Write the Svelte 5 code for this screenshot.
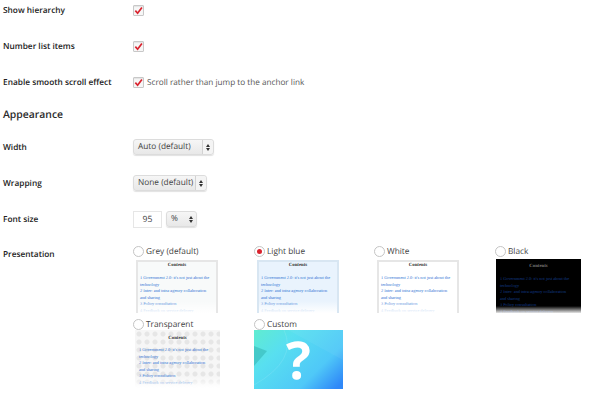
<script>
  const rows = [
    { label: 'Show hierarchy' },
    { label: 'Number list items' },
    { label: 'Enable smooth scroll effect', note: 'Scroll rather than jump to the anchor link' }
  ];
  const themes = [
    { name: 'Grey (default)', cls: 'grey' },
    { name: 'Light blue', cls: 'blue', on: true },
    { name: 'White', cls: 'white' },
    { name: 'Black', cls: 'black' },
    { name: 'Transparent', cls: 'clear' },
    { name: 'Custom', cls: 'custom' }
  ];
  const links = [
    '1 Government 2.0: it\'s not just about the\ntechnology',
    '2 Inter- and intra-agency collaboration\nand sharing',
    '3 Policy consultation',
    '4 Feedback on service delivery'
  ];
</script>

<div class="page">
  {#each rows as row}
    <div class="row check-row">
      <div class="label">{row.label}</div>
      <div class="field">
        <span class="check">
          <svg viewBox="0 0 10 10" width="9" height="9"><path d="M1.5 5.2 L4 8 L8.8 1.6" fill="none" stroke="#d9232e" stroke-width="1.9"/></svg>
        </span>
        {#if row.note}<span class="note">{row.note}</span>{/if}
      </div>
    </div>
  {/each}

  <h2>Appearance</h2>

  <div class="row select-row">
    <div class="label">Width</div>
    <div class="field"><span class="select wide">Auto (default)<span class="arrows"><i class="up"></i><i class="down"></i></span></span></div>
  </div>
  <div class="row select-row">
    <div class="label">Wrapping</div>
    <div class="field"><span class="select mid">None (default)<span class="arrows"><i class="up"></i><i class="down"></i></span></span></div>
  </div>
  <div class="row select-row">
    <div class="label">Font size</div>
    <div class="field">
      <span class="number">95</span>
      <span class="select unit">%<span class="arrows plain"><i class="up"></i><i class="down"></i></span></span>
    </div>
  </div>

  <div class="row present">
    <div class="label">Presentation</div>
    <div class="themes">
      {#each themes as theme}
        <div class="theme {theme.cls}">
          <div class="theme-name">
            <span class="radio" class:on={theme.on}></span>
            {theme.name}
          </div>
          {#if theme.cls === 'custom'}
            <div class="custom-box">
              <svg class="facet" viewBox="0 0 89 59" width="89" height="59">
                <path d="M0 16 L13 21 L0 36 Z" fill="#2aa8a8" opacity="0.45"/>
                <path d="M30 0 Q44 30 0 55" fill="none" stroke="#fff" stroke-width="0.6" opacity="0.18"/>
                <path d="M34 0 L89 30 L89 0 Z" fill="#fff" opacity="0.05"/>
              </svg>
              <span class="mark">?</span>
            </div>
          {:else}
            <div class="preview">
              <div class="toc-title">Contents</div>
              {#each links as link}
                <div class="toc-link">{link}</div>
              {/each}
              <div class="fade"></div>
            </div>
          {/if}
        </div>
      {/each}
    </div>
  </div>
</div>

<style>
  :global(body) {
    margin: 0;
    background: #fff;
  }

  .page {
    width: 600px;
    height: 400px;
    overflow: hidden;
    padding: 1px 0 0 3px;
    box-sizing: border-box;
    font-family: "Open Sans", "Liberation Sans", sans-serif;
    text-rendering: geometricPrecision;
    color: #333;
  }

  .row {
    display: grid;
    grid-template-columns: 130px 1fr;
    align-items: center;
  }

  .check-row {
    height: 18px;
    margin-bottom: 18px;
  }

  .label {
    font-size: 8.3px;
    font-weight: 600;
    color: #222;
  }

  .field {
    display: flex;
    align-items: center;
  }

  .check {
    width: 9px;
    height: 9px;
    border: 1px solid #c8c8c8;
    border-radius: 1px;
    background: #f7f7f7;
    display: flex;
    align-items: center;
    justify-content: center;
    box-shadow: inset 0 1px 1px rgba(0, 0, 0, 0.08);
  }

  .note {
    margin-left: 3px;
    font-size: 8.2px;
    color: #555;
  }

  h2 {
    margin: -6px 0 11px;
    height: 24px;
    line-height: 24px;
    font-size: 10.4px;
    font-weight: 600;
    color: #2a2a2a;
  }

  .select-row {
    height: 18px;
    margin-bottom: 18px;
  }

  .select {
    position: relative;
    display: inline-block;
    height: 16px;
    line-height: 14px;
    box-sizing: border-box;
    padding-left: 4px;
    border: 1px solid #dcdcdc;
    border-radius: 3px;
    background: linear-gradient(#f6f6f6, #e8e8e8);
    box-shadow: 0 1px 1px rgba(0, 0, 0, 0.12);
    font-size: 8.3px;
    color: #444;
  }

  .wide { width: 81px; }
  .mid { width: 74px; }
  .unit { width: 31px; margin-left: 4px; }

  .arrows {
    position: absolute;
    top: 0;
    right: 0;
    bottom: 0;
    width: 10px;
    border-left: 1px solid #d2d2d2;
    background: #f4f4f4;
    border-radius: 0 3px 3px 0;
    display: flex;
    flex-direction: column;
    align-items: center;
    justify-content: center;
    gap: 1px;
  }

  .arrows.plain {
    border-left: none;
    background: none;
  }

  .arrows i {
    width: 0;
    height: 0;
    border-left: 2px solid transparent;
    border-right: 2px solid transparent;
  }

  .arrows .up { border-bottom: 3px solid #333; }
  .arrows .down { border-top: 3px solid #333; }

  .number {
    display: inline-block;
    width: 29px;
    height: 17px;
    line-height: 14px;
    box-sizing: border-box;
    border: 1px solid #e6e6e6;
    text-align: center;
    font-size: 8.6px;
    color: #444;
  }

  .present {
    align-items: start;
    margin-top: -1px;
  }

  .present .label {
    margin-top: 4px;
  }

  .themes {
    display: grid;
    grid-template-columns: 121px 120px 121px 121px;
    grid-auto-rows: 73px;
  }

  .theme-name {
    display: flex;
    align-items: center;
    gap: 2px;
    height: 12px;
    font-size: 8.3px;
    color: #444;
  }

  .radio {
    width: 9px;
    height: 9px;
    border: 1px solid #c4c4c4;
    border-radius: 50%;
    background: #fff;
    position: relative;
  }

  .radio.on::after {
    content: '';
    position: absolute;
    left: 2px;
    top: 2px;
    width: 5px;
    height: 5px;
    border-radius: 50%;
    background: #d9232e;
  }

  .preview {
    position: relative;
    width: 82px;
    height: 53px;
    margin: 3px 0 0 3px;
    padding: 1px 2px 0;
    box-sizing: border-box;
    overflow: hidden;
    border: 2px solid #e6e6e6;
    border-bottom: none;
    font-family: "Liberation Serif", serif;
    background: #f8fafa;
  }

  .blue .preview { background: #e9f3fd; border-color: #d8e6f2; }
  .white .preview { background: #fff; }
  .black .preview {
    background: #000;
    border: none;
    width: 85px;
    height: 54px;
    margin: 2px 0 0 1px;
    padding: 5px 4px 0;
  }
  .clear .preview {
    width: 85px;
    height: 58px;
    margin: 0 0 0 2px;
    padding: 6px 4px 0;
    border: none;
    background:
      radial-gradient(circle at 4px 4px, #e6e6e6 0 2px, transparent 3px) 0 0 / 8px 8px,
      #f6f6f6;
  }

  .toc-title {
    text-align: center;
    font-size: 4.8px;
    font-weight: bold;
    color: #333;
    margin-bottom: 7px;
  }

  .clear .toc-title { margin-bottom: 6px; }
  .black .toc-title { color: #777; }

  .toc-link {
    font-size: 4.3px;
    line-height: 6.5px;
    white-space: pre;
    color: #2f74d4;
  }

  .black .toc-link { color: #123a86; }

  .fade {
    position: absolute;
    left: 0;
    right: 0;
    bottom: 0;
    height: 12px;
    background: linear-gradient(rgba(255, 255, 255, 0), #fff);
  }

  .black .fade {
    height: 7px;
    background: linear-gradient(rgba(255, 255, 255, 0), rgba(255, 255, 255, 0.9));
  }

  .custom-box {
    position: relative;
    width: 89px;
    height: 59px;
    background: linear-gradient(135deg, #60ecd0 0%, #58dff0 30%, #4fc8f8 70%, #2f88f8 95%);
    display: flex;
    align-items: center;
    justify-content: center;
  }

  .facet {
    position: absolute;
    left: 0;
    top: 0;
  }

  .mark {
    position: relative;
    font-size: 52px;
    font-weight: 700;
    color: #fff;
    line-height: 1;
  }
</style>
